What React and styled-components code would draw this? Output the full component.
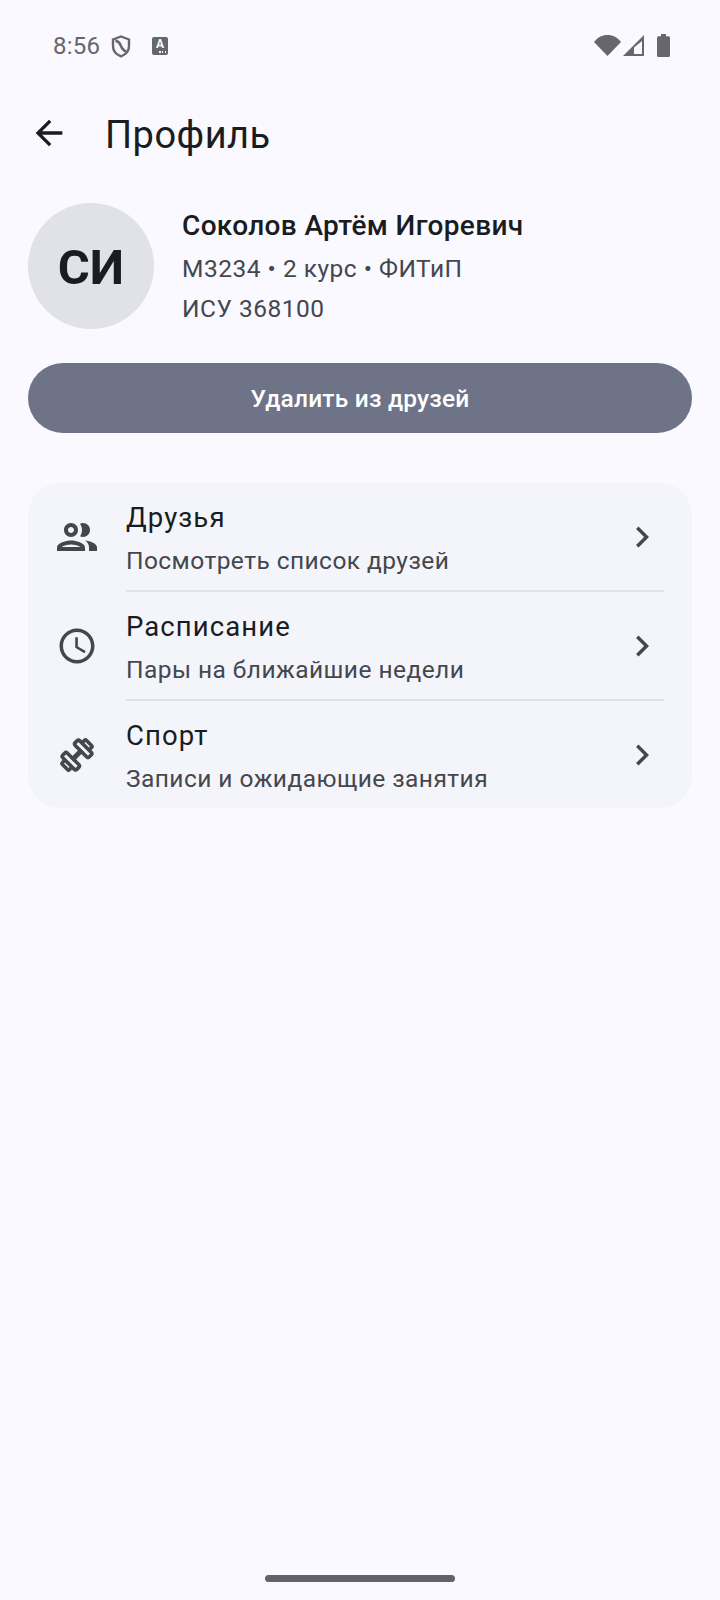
import React from 'react';
import styled, { createGlobalStyle } from 'styled-components';

const GlobalStyle = createGlobalStyle`
  html, body {
    margin: 0;
    padding: 0;
    background: #f9f9ff;
  }
  body {
    font-family: Roboto, "Noto Sans", sans-serif;
  }
`;

const Screen = styled.div`
  width: 720px;
  height: 1600px;
  display: flex;
  flex-direction: column;
  background: #f9f9ff;
  overflow: hidden;
`;

const StatusBar = styled.div`
  height: 92px;
  flex: none;
  display: flex;
  align-items: center;
  justify-content: space-between;
  padding: 0 50px 0 53px;
  box-sizing: border-box;
  color: #66676c;
`;

const StatusGroup = styled.div`
  display: flex;
  align-items: center;
`;

const SignalGroup = styled(StatusGroup)`
  margin-bottom: 2px;
`;

const Time = styled.span`
  font-size: 24px;
  letter-spacing: 0.2px;
  margin-right: 11px;
`;

const KeyboardBadge = styled.div`
  position: relative;
  width: 16px;
  height: 18px;
  margin-left: 21px;
  border-radius: 2px;
  background: #66676c;
  color: #f9f9ff;
  font-size: 12px;
  font-weight: 700;
  line-height: 14px;
  text-align: center;
`;

const BadgeDots = styled.span`
  position: absolute;
  right: 2px;
  bottom: 2px;
  width: 7px;
  height: 2px;
  background: repeating-linear-gradient(90deg, #f9f9ff 0 1.5px, transparent 1.5px 2.75px);
`;

const StatusSvg = styled.svg`
  display: block;
  margin-left: ${(p) => p.$gap || 0}px;
`;

const Toolbar = styled.div`
  height: 82px;
  padding-bottom: 6px;
  flex: none;
  display: flex;
  align-items: center;
  padding-left: 28px;
`;

const BackButton = styled.div`
  width: 42px;
  height: 42px;
  margin-right: 35px;
  display: flex;
  align-items: center;
  justify-content: center;
`;

const Title = styled.h1`
  margin: 0;
  padding-top: 4px;
  font-size: 38px;
  font-weight: 400;
  letter-spacing: 0.5px;
  color: #191c20;
`;

const Content = styled.div`
  flex: 1;
  padding: 23px 28px 0;
  display: flex;
  flex-direction: column;
`;

const Profile = styled.div`
  display: flex;
  align-items: center;
  gap: 28px;
`;

const Avatar = styled.div`
  width: 126px;
  height: 126px;
  padding-top: 2px;
  box-sizing: border-box;
  border-radius: 50%;
  background: #e1e2e9;
  color: #191c20;
  display: flex;
  align-items: center;
  justify-content: center;
  font-size: 49px;
  font-weight: 700;
`;

const ProfileText = styled.div`
  display: flex;
  flex-direction: column;
`;

const Name = styled.div`
  padding-top: 1px;
  margin-bottom: 1px;
  font-size: 28px;
  line-height: 44px;
  font-weight: 500;
  letter-spacing: 0.35px;
  color: #191c20;
`;

const Meta = styled.div`
  font-size: 24.5px;
  line-height: 40px;
  letter-spacing: 0.5px;
  color: #44474e;
`;

const DeleteButton = styled.button`
  margin-top: 34px;
  height: 70px;
  padding-top: 2px;
  border: 0;
  border-radius: 35px;
  background: #6e7387;
  color: #fff;
  font-family: inherit;
  font-size: 24.5px;
  font-weight: 500;
  letter-spacing: 0.2px;
`;

const Card = styled.div`
  margin-top: 50px;
  background: #f4f4fb;
  border-radius: 32px;
  display: flex;
  flex-direction: column;
`;

const Row = styled.div`
  height: 107px;
  display: flex;
  align-items: center;
  padding: 0 28px;
`;

const RowIcon = styled.div`
  width: 70px;
  flex: none;
  display: flex;
  align-items: center;
  color: #44474e;
`;

const GroupSvg = styled.svg`
  display: block;
  margin-left: -3px;
`;

const RowText = styled.div`
  flex: 1;
  padding-top: 5px;
  display: flex;
  flex-direction: column;
  gap: 1px;
`;

const RowTitle = styled.div`
  font-size: 27.5px;
  line-height: 42px;
  letter-spacing: 1.1px;
  color: #191c20;
`;

const RowSub = styled.div`
  font-size: 24.5px;
  line-height: 42px;
  letter-spacing: 0.45px;
  color: #44474e;
`;

const Divider = styled.div`
  height: 2px;
  margin: 0 28px 0 98px;
  background: #e1e2e8;
`;

const Chevron = styled.div`
  display: flex;
  align-items: center;
  color: #44474e;
  margin-right: 1px;
`;

const HomeBar = styled.div`
  flex: none;
  align-self: center;
  width: 190px;
  height: 7px;
  margin-bottom: 18px;
  border-radius: 4px;
  background: #626267;
`;

const Icon = ({ size, d, color = 'currentColor' }) => (
  <svg width={size} height={size} viewBox="0 0 24 24" fill={color}>
    <path d={d} />
  </svg>
);

const ChevronIcon = () => (
  <svg width="42" height="42" viewBox="0 0 24 24" fill="currentColor">
    <path d="M10 6L8.59 7.41 13.17 12l-4.58 4.59L10 18l6-6z" />
  </svg>
);

const clock =
  'M11.99 2C6.47 2 2 6.48 2 12s4.47 10 9.99 10C17.52 22 22 17.52 22 12S17.52 2 11.99 2zM12 20c-4.42 0-8-3.58-8-8s3.58-8 8-8 8 3.58 8 8-3.58 8-8 8zm.5-13H11v6l5.25 3.15.75-1.23-4.5-2.67z';

const GroupIcon = () => (
  <GroupSvg width="48" height="48" viewBox="0 0 24 24" fill="currentColor">
    <path d="M9 13.75c-2.34 0-7 1.17-7 3.5V19h14v-1.75c0-2.33-4.66-3.5-7-3.5zM4.34 17c.84-.58 2.87-1.25 4.66-1.25s3.82.67 4.66 1.25H4.34zM9 12c1.93 0 3.5-1.57 3.5-3.5S10.93 5 9 5 5.5 6.57 5.5 8.5 7.07 12 9 12zm0-5c.83 0 1.5.67 1.5 1.5S9.83 10 9 10s-1.5-.67-1.5-1.5S8.17 7 9 7zm7.04 6.81c1.16.84 1.96 1.96 1.96 3.44V19h4v-1.75c0-2.02-3.5-3.17-5.96-3.44zM15 12c1.93 0 3.5-1.57 3.5-3.5S16.93 5 15 5c-.54 0-1.04.13-1.5.35.63.89 1 1.98 1 3.15s-.37 2.26-1 3.15c.46.22.96.35 1.5.35z" />
  </GroupSvg>
);

// outlined dumbbell, drawn along the diagonal
const Dumbbell = () => (
  <svg width="42" height="42" viewBox="0 0 42 42" fill="none" stroke="currentColor" strokeWidth="3.6" strokeLinejoin="round">
    <g transform="rotate(-45 21 21)">
      <path d="M14 21h14" strokeWidth="5" />
      <rect x="9" y="11" width="6.5" height="20" rx="2" />
      <rect x="26.5" y="11" width="6.5" height="20" rx="2" />
      <path d="M9 16H5.500a1.500 1.500 0 0 0-1.500 1.500v7a1.500 1.500 0 0 0 1.500 1.500H9" />
      <path d="M33 16h3.500a1.500 1.500 0 0 1 1.500 1.500v7a1.500 1.500 0 0 1-1.500 1.500H33" />
    </g>
  </svg>
);

const ShieldIcon = () => (
  <svg width="20" height="23" viewBox="0 0 20 23" fill="none" stroke="currentColor" strokeWidth="2.4">
    <path d="M10 1.500l8 3v6.500c0 4.800-3.200 8.500-8 10.300-4.800-1.800-8-5.500-8-10.300V4.500z" />
    <path d="M4.500 5.500c3 1 4.500 2.500 5.500 5.500s2.500 4.500 5 5.500" />
  </svg>
);

const SignalIcons = () => (
  <>
    <StatusSvg width="27" height="21" viewBox="0 0 27 21" fill="currentColor">
      <path d="M0 7C3.500 2.500 8 0 13.500 0S23.500 2.500 27 7L13.500 21z" />
    </StatusSvg>
    <StatusSvg $gap={2} width="21" height="21" viewBox="0 0 21 21">
      <path d="M21 0v21H0z" fill="currentColor" />
      <path d="M19 6v13h-8v-6.500z" fill="#f9f9ff" />
    </StatusSvg>
    <StatusSvg $gap={13} width="13" height="23" viewBox="0 0 13 23" fill="currentColor">
      <path d="M4 0h5v2.200h2.500a1.500 1.500 0 0 1 1.500 1.500v17.800a1.500 1.500 0 0 1-1.500 1.500h-10A1.500 1.500 0 0 1 0 21.500V3.700a1.500 1.500 0 0 1 1.500-1.500H4z" />
    </StatusSvg>
  </>
);

const menu = [
  { title: 'Друзья', sub: 'Посмотреть список друзей', icon: <GroupIcon /> },
  { title: 'Расписание', sub: 'Пары на ближайшие недели', icon: <Icon size={42} d={clock} /> },
  { title: 'Спорт', sub: 'Записи и ожидающие занятия', icon: <Dumbbell /> },
];

export default function App() {
  return (
    <Screen>
      <GlobalStyle />
      <StatusBar>
        <StatusGroup>
          <Time>8:56</Time>
          <ShieldIcon />
          <KeyboardBadge>
            A
            <BadgeDots />
          </KeyboardBadge>
        </StatusGroup>
        <SignalGroup>
          <SignalIcons />
        </SignalGroup>
      </StatusBar>
      <Toolbar>
        <BackButton>
          <Icon size={40} color="#191c20" d="M20 11H7.830l5.590-5.590L12 4l-8 8 8 8 1.410-1.410L7.830 13H20v-2z" />
        </BackButton>
        <Title>Профиль</Title>
      </Toolbar>
      <Content>
        <Profile>
          <Avatar>СИ</Avatar>
          <ProfileText>
            <Name>Соколов Артём Игоревич</Name>
            <Meta>М3234 • 2 курс • ФИТиП</Meta>
            <Meta>ИСУ 368100</Meta>
          </ProfileText>
        </Profile>
        <DeleteButton>Удалить из друзей</DeleteButton>
        <Card>
          {menu.map((item, i) => (
            <React.Fragment key={item.title}>
              {i > 0 && <Divider />}
              <Row>
                <RowIcon>{item.icon}</RowIcon>
                <RowText>
                  <RowTitle>{item.title}</RowTitle>
                  <RowSub>{item.sub}</RowSub>
                </RowText>
                <Chevron>
                  <ChevronIcon />
                </Chevron>
              </Row>
            </React.Fragment>
          ))}
        </Card>
      </Content>
      <HomeBar />
    </Screen>
  );
}
